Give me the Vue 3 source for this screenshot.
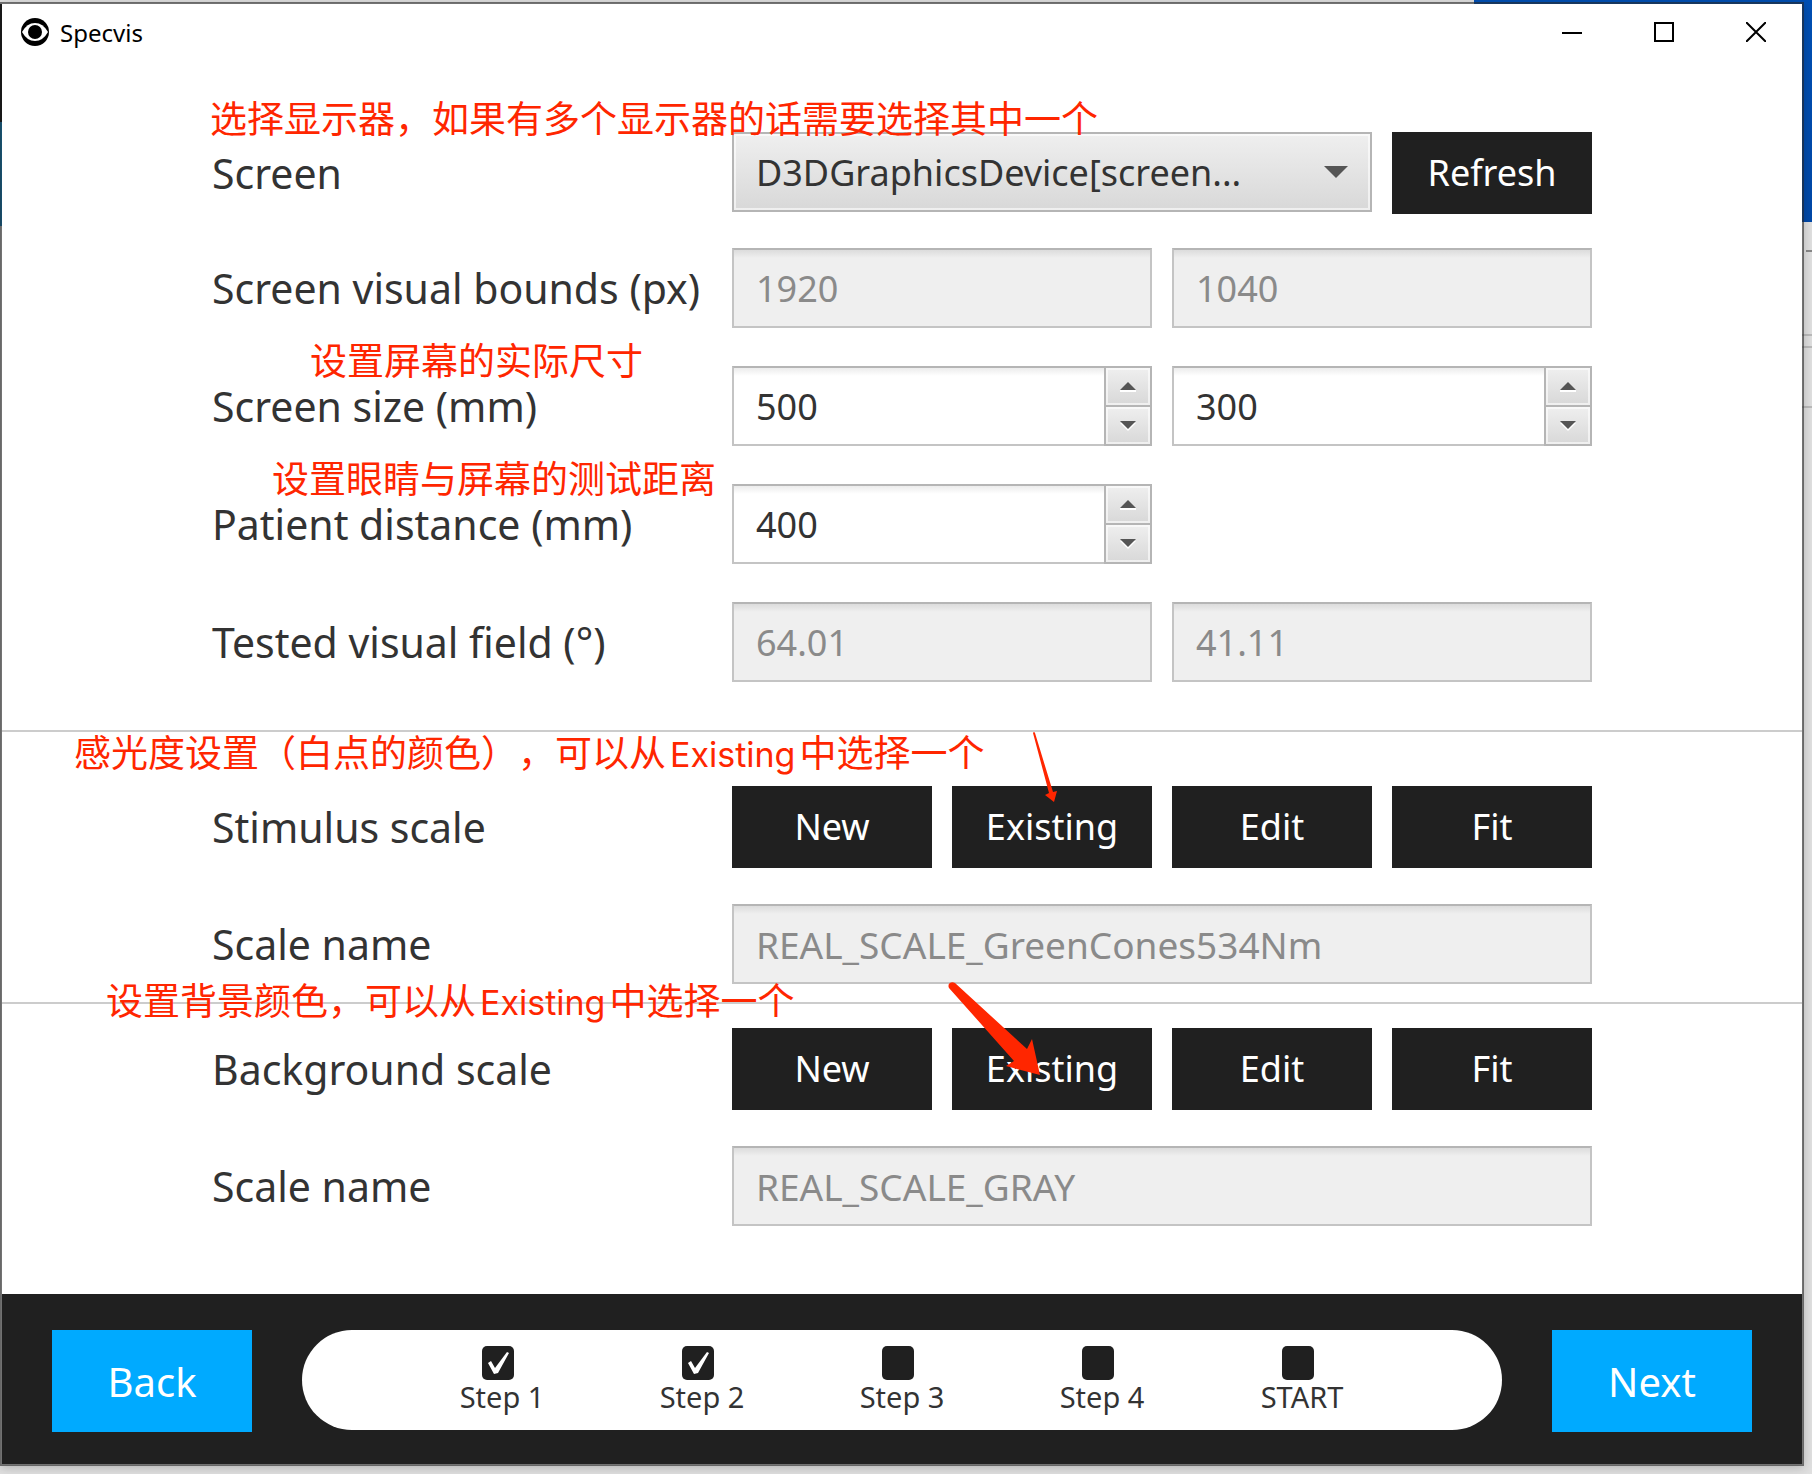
<script setup>
import { ref } from 'vue'

const device = 'D3DGraphicsDevice[screen...'
const bounds = ['1920', '1040']
const sizes = ref([500, 300])
const distance = ref(400)
const field = ['64.01', '41.11']
const actions = ['New', 'Existing', 'Edit', 'Fit']
const steps = ref([
  { label: 'Step 1', done: true },
  { label: 'Step 2', done: true },
  { label: 'Step 3', done: false },
  { label: 'Step 4', done: false },
  { label: 'START', done: false }
])
</script>

<template>
  <div class="desktop">
    <div class="window">
      <header class="titlebar">
        <svg class="logo" width="28" height="28" viewBox="0 0 28 28">
          <circle cx="14" cy="14" r="14" fill="#000" />
          <path d="M1 14Q6 5 14 5T27 14Q22 23 14 23T1 14Z" fill="#fff" />
          <circle cx="14" cy="14" r="7" fill="#000" />
        </svg>
        <h1>Specvis</h1>
        <div class="controls">
          <button type="button" aria-label="Minimize">
            <svg width="20" height="20" viewBox="0 0 20 20"><path d="M0 11H20" stroke="#000" stroke-width="2" /></svg>
          </button>
          <button type="button" aria-label="Maximize">
            <svg width="20" height="20" viewBox="0 0 20 20"><rect x="1" y="1" width="18" height="18" fill="none" stroke="#000" stroke-width="2" /></svg>
          </button>
          <button type="button" aria-label="Close">
            <svg width="20" height="20" viewBox="0 0 20 20"><path d="M0 0L20 20M20 0L0 20" stroke="#000" stroke-width="2" /></svg>
          </button>
        </div>
      </header>

      <main>
        <section class="group screen-group">
          <div class="row">
            <p class="note note-screen">选择显示器，如果有多个显示器的话需要选择其中一个</p>
            <label for="screen">Screen</label>
            <div class="select span-3">
              <select id="screen"><option>{{ device }}</option></select>
              <svg width="24" height="12" viewBox="0 0 24 12"><path d="M0 0H24L12 12Z" fill="#555" /></svg>
            </div>
            <button type="button" class="dark">Refresh</button>
          </div>
          <div class="row">
            <label for="bounds-0">Screen visual bounds (px)</label>
            <input v-for="(b, i) in bounds" :id="'bounds-' + i" :key="i" class="box span-2" :value="b" aria-label="Screen visual bounds (px)" disabled />
          </div>
          <div class="row">
            <p class="note note-size">设置屏幕的实际尺寸</p>
            <label for="size-0">Screen size (mm)</label>
            <div v-for="(s, i) in sizes" :key="i" class="spinner span-2">
              <input :id="'size-' + i" v-model="sizes[i]" class="box" aria-label="Screen size (mm)" />
              <div class="arrows">
                <button type="button" aria-label="Increase" @click="sizes[i]++">
                  <svg width="16" height="10" viewBox="0 0 16 10"><path d="M0 10H16V8L8 2L0 8Z" fill="#fff" /><path d="M0 8L8 0L16 8Z" fill="#555" /></svg>
                </button>
                <button type="button" aria-label="Decrease" @click="sizes[i]--">
                  <svg width="16" height="10" viewBox="0 0 16 10"><path d="M0 2L8 10L16 2Z" fill="#fff" /><path d="M0 0L8 8L16 0Z" fill="#555" /></svg>
                </button>
              </div>
            </div>
          </div>
          <div class="row">
            <p class="note note-distance">设置眼睛与屏幕的测试距离</p>
            <label for="distance">Patient distance (mm)</label>
            <div class="spinner span-2">
              <input id="distance" v-model="distance" class="box" />
              <div class="arrows">
                <button type="button" aria-label="Increase" @click="distance++">
                  <svg width="16" height="10" viewBox="0 0 16 10"><path d="M0 10H16V8L8 2L0 8Z" fill="#fff" /><path d="M0 8L8 0L16 8Z" fill="#555" /></svg>
                </button>
                <button type="button" aria-label="Decrease" @click="distance--">
                  <svg width="16" height="10" viewBox="0 0 16 10"><path d="M0 2L8 10L16 2Z" fill="#fff" /><path d="M0 0L8 8L16 0Z" fill="#555" /></svg>
                </button>
              </div>
            </div>
          </div>
          <div class="row">
            <label for="field-0">Tested visual field (°)</label>
            <input v-for="(f, i) in field" :id="'field-' + i" :key="i" class="box span-2" :value="f" aria-label="Tested visual field (°)" disabled />
          </div>
        </section>

        <section class="group stimulus-group">
          <div class="row">
            <p class="note note-stimulus">感光度设置（白点的颜色），可以从<span>Existing</span>中选择一个</p>
            <span class="label">Stimulus scale</span>
            <button v-for="a in actions" :key="a" type="button" class="dark">{{ a }}</button>
            <svg class="arrow arrow-small" width="26" height="72" viewBox="0 0 26 72">
              <path d="M0 1Q1 -1 2 1L20 60L24 59L21 70L12 63L16 61Z" fill="#ff2600" />
            </svg>
          </div>
          <div class="row">
            <label for="stimulus">Scale name</label>
            <input id="stimulus" class="box name span-4" value="REAL_SCALE_GreenCones534Nm" disabled />
          </div>
        </section>

        <section class="group background-group">
          <div class="row">
            <p class="note note-background">设置背景颜色，可以从<span>Existing</span>中选择一个</p>
            <span class="label">Background scale</span>
            <button v-for="a in actions" :key="a" type="button" class="dark">{{ a }}</button>
            <svg class="arrow arrow-large" width="94" height="94" viewBox="0 0 94 94">
              <path d="M1 6C-1 2 3 -1 7 1L79 67L84 57L92 93L58 84L66 79Z" fill="#ff2600" />
            </svg>
          </div>
          <div class="row">
            <label for="background">Scale name</label>
            <input id="background" class="box name span-4" value="REAL_SCALE_GRAY" disabled />
          </div>
        </section>
      </main>

      <footer>
        <button type="button" class="nav">Back</button>
        <div class="steps">
          <label v-for="s in steps" :key="s.label" class="step">
            <input v-model="s.done" type="checkbox" />
            <svg width="32" height="34" viewBox="0 0 32 34">
              <rect width="32" height="34" rx="5" fill="#202020" />
              <path v-if="s.done" d="M6 17L9 15L13 22L25 6L27 7L16 27L12 28Z" fill="#fff" />
            </svg>
            <span>{{ s.label }}</span>
          </label>
        </div>
        <button type="button" class="nav">Next</button>
      </footer>
    </div>
  </div>
</template>

<style>
body {
  margin: 0;
  background: #e0e0e0;
}
</style>

<style scoped>
.desktop {
  box-sizing: border-box;
  min-height: 100vh;
  padding: 2px 8px 8px 0;
  /* other windows and the wallpaper that peek out around this one */
  background:
    linear-gradient(#0050b5, #0048a8) top right / 338px 222px no-repeat,
    linear-gradient(#888, #888) right 0 top 250px / 6px 2px no-repeat,
    linear-gradient(#bbb, #bbb) right 0 top 334px / 10px 2px no-repeat,
    linear-gradient(#bbb, #bbb) right 0 top 346px / 10px 2px no-repeat,
    linear-gradient(#bbb, #bbb) right 0 top 406px / 10px 2px no-repeat,
    linear-gradient(#000 118px, #0090d8 118px, #0080c8 222px, #d9d9d9 222px) left 0 top 4px / 2px 222px no-repeat,
    #e0e0e0;
  font-family: "Noto Sans", "Open Sans", sans-serif;
  font-size: 36px;
  color: #333;
}
.window {
  border: 2px solid rgba(40, 40, 40, 0.6);
  background: #fff;
  background-clip: padding-box;
  box-shadow: 0 2px 10px rgba(0, 0, 0, 0.2);
}
button,
input,
select {
  margin: 0;
  padding: 0;
  border: 0;
  border-radius: 0;
  font: inherit;
  color: inherit;
}
.titlebar {
  display: flex;
  align-items: center;
  height: 56px;
  padding-left: 19px;
}
.titlebar h1 {
  flex: 1;
  margin: 0 0 0 11px;
  font-size: 24px;
  font-weight: 400;
  color: #000;
}
.controls {
  display: flex;
}
.controls button {
  display: grid;
  place-items: center;
  width: 92px;
  height: 56px;
  background: none;
}
.group {
  display: flex;
  flex-direction: column;
  gap: 36px;
  padding: 0 210px;
}
.screen-group {
  gap: 38px;
  padding-top: 72px;
  padding-bottom: 48px;
}
.screen-group .row:first-child {
  margin-bottom: -4px;
}
.stimulus-group {
  padding-top: 54px;
  padding-bottom: 18px;
  border-top: 2px solid #ccc;
}
.background-group {
  padding-top: 24px;
  padding-bottom: 68px;
  border-top: 2px solid #ccc;
}
.row {
  position: relative;
  display: grid;
  grid-template-columns: minmax(0, 5fr) repeat(4, minmax(0, 2fr));
  column-gap: 20px;
}
.row > label,
.label {
  align-self: center;
  font-size: 41px;
  line-height: 52px;
  white-space: nowrap;
}
.span-2 {
  grid-column: span 2;
}
.span-3 {
  grid-column: span 3;
}
.span-4 {
  grid-column: span 4;
}
.box {
  box-sizing: border-box;
  width: 100%;
  height: 80px;
  padding: 0 22px;
  border: 2px solid #c4c4c4;
  border-top-color: #b5b5b5;
  background: linear-gradient(#ececec, #fff 8px);
}
.box:disabled {
  background: linear-gradient(#dcdcdc, #efefef 8px);
  color: #8a8a8a;
}
.name {
  font-size: 37px;
}
.select {
  position: relative;
  height: 80px;
}
.select select {
  box-sizing: border-box;
  width: 100%;
  height: 80px;
  padding: 0 22px;
  border: 2px solid #b5b5b5;
  appearance: none;
  background: linear-gradient(#efefef, #d8d8d8);
  box-shadow: inset 0 0 0 2px #ffffff99;
}
.select svg {
  position: absolute;
  right: 24px;
  top: 34px;
  pointer-events: none;
}
.dark {
  height: 82px;
  padding-bottom: 2px;
  background: #202020;
  color: #fff;
}
.spinner {
  display: flex;
}
.spinner .box {
  flex: 1;
  min-width: 0;
  border-right: 0;
}
.arrows {
  box-sizing: border-box;
  display: grid;
  grid-template-rows: 1fr 1fr;
  gap: 2px;
  width: 48px;
  height: 80px;
  border: 2px solid #b5b5b5;
  background: #b5b5b5;
}
.arrows button {
  display: grid;
  place-items: center;
  background: linear-gradient(#efefef, #d8d8d8);
  box-shadow: inset 0 0 0 2px #ffffff99;
}
.note {
  position: absolute;
  z-index: 1;
  margin: 0;
  font-family: Inter, "Noto Sans CJK SC", sans-serif;
  font-size: 37px;
  line-height: 48px;
  text-spacing-trim: space-all;
  white-space: nowrap;
  color: #ff2600;
}
.note span {
  padding: 0 4px;
  font-size: 34px;
}
.note-screen {
  left: -2px;
  top: -36px;
}
.note-size {
  left: 98px;
  top: -28px;
}
.note-distance {
  left: 60px;
  top: -28px;
}
.note-stimulus {
  left: -138px;
  top: -56px;
}
.note-background {
  left: -106px;
  top: -50px;
}
.arrow {
  position: absolute;
  z-index: 1;
}
.arrow-small {
  left: 821px;
  top: -54px;
}
.arrow-large {
  left: 736px;
  top: -46px;
}
footer {
  box-sizing: border-box;
  display: flex;
  align-items: flex-start;
  gap: 50px;
  height: 170px;
  padding: 36px 50px 0;
  background: #202020;
}
.nav {
  width: 200px;
  height: 102px;
  background: #00aaff;
  font-size: 40px;
  color: #fff;
}
.steps {
  display: flex;
  flex: 1;
  justify-content: center;
  height: 100px;
  border-radius: 50px;
  background: #fff;
}
.step {
  position: relative;
  display: flex;
  flex-direction: column;
  align-items: center;
  width: 200px;
  padding-top: 16px;
  font-size: 29px;
  line-height: 34px;
}
.step input {
  position: absolute;
  width: 32px;
  height: 34px;
  opacity: 0;
}
.step svg {
  margin-right: 8px;
}
</style>
